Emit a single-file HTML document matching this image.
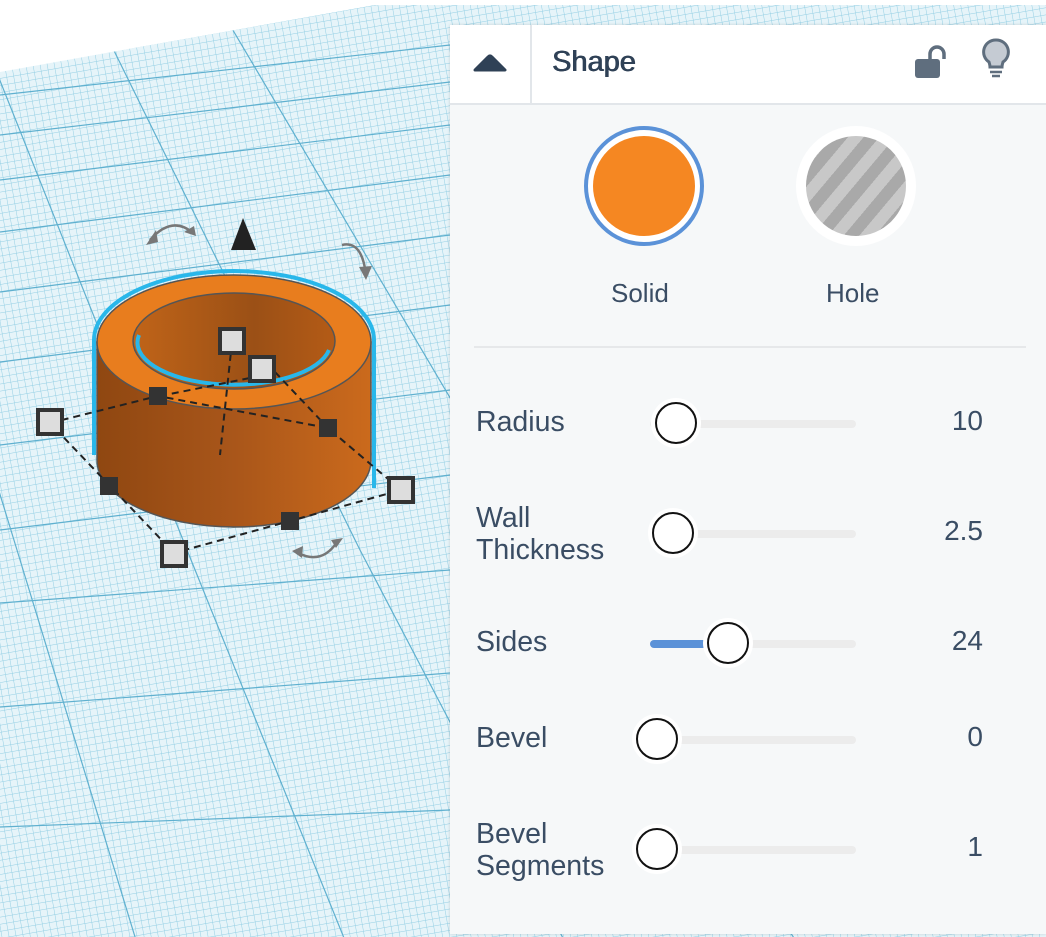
<!DOCTYPE html>
<html><head><meta charset="utf-8">
<style>
*{margin:0;padding:0;box-sizing:border-box}
html,body{width:1046px;height:937px;overflow:hidden}
body{background:#fff;font-family:"Liberation Sans",sans-serif;position:relative}
#panel{position:absolute;left:450px;top:25px;width:596px;height:909px;background:#f6f8f9;box-shadow:0 0 3px rgba(0,0,0,.15)}
#hdr{position:absolute;left:0;top:0;width:596px;height:80px;background:#fff;border-bottom:2px solid #e2e6ea}
#hdr .sep{position:absolute;left:80px;top:0;width:2px;height:80px;background:#e2e6ea}
#hdr .title{position:absolute;left:102px;top:21px;font-size:29px;color:#2f4156;text-shadow:0.5px 0 0 #2f4156,-0.3px 0 0 #2f4156}
.lbl{position:absolute;left:26px;font-size:28.5px;color:#3a4d64;line-height:32px}
.val{position:absolute;right:63px;font-size:28px;color:#3a4d64}
.track{position:absolute;left:200px;width:206px;height:8px;border-radius:4px;background:#ececec}
.knob{position:absolute;width:42px;height:42px;border-radius:50%;background:#fff;border:2px solid #111;box-shadow:0 0 0 4px #fff}
</style></head><body>
<svg width="1046" height="937" style="position:absolute;left:0;top:0;display:block">
<defs>
<pattern id="g" width="7" height="7" patternUnits="userSpaceOnUse" patternTransform="rotate(-10)">
<rect width="7" height="7" fill="#e6f4f9"/>
<path d="M0 0H7M0 0V7" stroke="#94cfe4" stroke-width="1"/>
</pattern>
<clipPath id="pc"><polygon points="0,72 375,5 1046,5 1046,937 0,937"/></clipPath>
<linearGradient id="body" x1="0" x2="1"><stop offset="0" stop-color="#8f4711"/><stop offset=".5" stop-color="#a9561a"/><stop offset="1" stop-color="#cb6a1c"/></linearGradient>
<linearGradient id="inn" x1="0" x2="1"><stop offset="0" stop-color="#c06418"/><stop offset=".6" stop-color="#9b5016"/><stop offset="1" stop-color="#b45b16"/></linearGradient>
</defs>
<polygon points="0,72 375,5 1046,5 1046,937 0,937" fill="url(#g)"/>
<g stroke="#5fb0cf" stroke-width="1.2" fill="none" clip-path="url(#pc)">
<path d="M0,95 L450,45"/><path d="M0,135 L450,82"/><path d="M0,180 L450,125"/><path d="M0,232 L450,175"/><path d="M0,292 L450,235"/><path d="M0,362 L450,305"/><path d="M0,445 L450,390"/><path d="M0,530 L450,475"/><path d="M0,603 L450,570"/><path d="M0,707 L450,673"/><path d="M0,827 L450,810"/>
<path d="M-544,-1285 L-330,550 L-230,1400"/><path d="M-544,-1285 L-155,550 L0,1300"/><path d="M-544,-1285 L17,550 L200,1150"/><path d="M-544,-1285 L187,550 L450,1200"/><path d="M-544,-1285 L360,550 L700,1200"/><path d="M-544,-1285 L540,550 L900,1100"/>
</g>
<path d="M94,455 L94,340 A140,69 0 0 1 374,340 L374,488" stroke="#29b7ea" stroke-width="4" fill="none"/>
<path d="M97,342 L97,460 A137,67 0 0 0 371,460 L371,342 Z" fill="url(#body)" stroke="#555" stroke-width="1.5"/>
<ellipse cx="234" cy="342" rx="137" ry="67" fill="#e87d1e" stroke="#555" stroke-width="1.5"/>
<ellipse cx="234" cy="341" rx="101" ry="48" fill="url(#inn)" stroke="#555" stroke-width="1.5"/>
<path d="M139,335 A96,42 0 0 0 329,350" stroke="#29b7ea" stroke-width="4" fill="none"/>
<g stroke="#222" stroke-width="2" stroke-dasharray="7,5" fill="none">
<path d="M50,423 L158,396 L328,428 L401,490 L290,521 L174,553 L50,423"/>
<path d="M232,342 L220,455"/><path d="M160,396 L250,378 M275,372 L328,428"/>
</g>
<g fill="#333"><rect x="149" y="387" width="18" height="18"/><rect x="319" y="419" width="18" height="18"/><rect x="100" y="477" width="18" height="18"/><rect x="281" y="512" width="18" height="18"/></g>
<g fill="#ddd" stroke="#333" stroke-width="4">
<rect x="38" y="410" width="24" height="24"/><rect x="389" y="478" width="24" height="24"/><rect x="162" y="542" width="24" height="24"/><rect x="220" y="329" width="24" height="24"/><rect x="250" y="357" width="24" height="24"/>
</g>
<polygon points="243,218 231,250 256,250" fill="#222"/>
<g stroke="#777" stroke-width="2.5" fill="none">
<path d="M150,240 Q172,215 193,233"/><path d="M342,245 Q362,240 366,275"/><path d="M298,553 Q322,565 337,542"/>
</g>
<g fill="#777"><polygon points="146,245 156,230 158,242"/><polygon points="196,236 184,232 194,226"/><polygon points="366,280 359,267 372,266"/><polygon points="292,551 303,546 302,558"/><polygon points="343,538 336,548 331,540"/></g>
</svg>
<div id="panel">
<div id="hdr"><svg width="80" height="80" style="position:absolute;left:0;top:0"><path d="M25,45 L38,32 Q40,30 42,32 L55,45 Z" fill="#2f4156" stroke="#2f4156" stroke-width="3" stroke-linejoin="round"/></svg>
<div class="sep"></div><div class="title">Shape</div>
<svg width="40" height="40" style="position:absolute;left:462px;top:18px"><path d="M18,18 V11 A7,7 0 0 1 32,11 V16" stroke="#5f6e7e" stroke-width="3.5" fill="none"/><rect x="3" y="16" width="25" height="19" rx="3" fill="#5f6e7e"/></svg>
<svg width="40" height="44" style="position:absolute;left:526px;top:12px"><path d="M20,3 A12,12 0 0 0 13,25 Q14,28 14,30 H26 Q26,28 27,25 A12,12 0 0 0 20,3 Z" fill="#c5cbd3" stroke="#5f6e7e" stroke-width="3"/><path d="M14,35 H26 M16,39 H24" stroke="#5f6e7e" stroke-width="2.5"/></svg>
</div>
<div style="position:absolute;left:134px;top:101px;width:120px;height:120px;border-radius:50%;border:4px solid #5b92d8;background:#fff"></div>
<div style="position:absolute;left:143px;top:111px;width:102px;height:100px;border-radius:50%;background:#f58722"></div>
<div style="position:absolute;left:346px;top:101px;width:120px;height:120px;border-radius:50%;background:#fff"></div>
<div style="position:absolute;left:356px;top:111px;width:100px;height:100px;border-radius:50%;background:repeating-linear-gradient(-50deg,#c8c8c8 0 12px,#a9a9a9 12px 24px)"></div>
<div style="position:absolute;left:161px;top:253px;font-size:26px;color:#3a4d64">Solid</div>
<div style="position:absolute;left:376px;top:253px;font-size:26px;color:#3a4d64">Hole</div>
<div style="position:absolute;left:24px;top:321px;width:552px;height:2px;background:#e6e8ea"></div>
<div class="lbl" style="top:381px">Radius</div><div class="track" style="top:395px"></div><div class="knob" style="left:205px;top:377px"></div><div class="val" style="top:380px">10</div>
<div class="lbl" style="top:477px">Wall<br>Thickness</div><div class="track" style="top:505px"></div><div class="knob" style="left:202px;top:487px"></div><div class="val" style="top:490px">2.5</div>
<div class="lbl" style="top:601px">Sides</div><div class="track" style="top:615px;background:linear-gradient(90deg,#5b92d8 0 28%,#ececec 28%)"></div><div class="knob" style="left:257px;top:597px"></div><div class="val" style="top:600px">24</div>
<div class="lbl" style="top:697px">Bevel</div><div class="track" style="top:711px"></div><div class="knob" style="left:186px;top:693px"></div><div class="val" style="top:696px">0</div>
<div class="lbl" style="top:793px">Bevel<br>Segments</div><div class="track" style="top:821px"></div><div class="knob" style="left:186px;top:803px"></div><div class="val" style="top:806px">1</div>
</div>
</body></html>
